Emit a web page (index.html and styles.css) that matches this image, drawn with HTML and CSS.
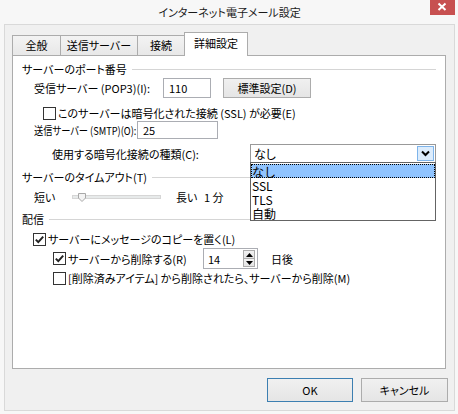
FILE: index.html
```html
<!DOCTYPE html>
<html lang="ja">
<head>
<meta charset="utf-8">
<title>インターネット電子メール設定</title>
<link rel="stylesheet" href="styles.css">
</head>
<body>
<div class="window">
  <div class="titlebar">
    <span class="title">インターネット電子メール設定</span>
    <span class="close"><svg width="25" height="15" viewBox="0 0 25 15"><path d="M8.5 3.5 L15.5 10 M15.5 3.5 L8.5 10" stroke="#fff" stroke-width="2" fill="none"/></svg></span>
  </div>
  <div class="client">
    <div class="tabs">
      <div class="tab t1">全般</div>
      <div class="tab t2">送信サーバー</div>
      <div class="tab t3">接続</div>
      <div class="tab t4 active">詳細設定</div>
    </div>
    <div class="panel">
      <div class="group g1"><span>サーバーのポート番号</span><span class="line"></span></div>

      <div class="row r-pop3">
        <span class="lbl lbl-pop3">受信サーバー (POP3)(I):</span>
        <span class="textbox tb-pop3">110</span>
        <span class="btn btn-std">標準設定(D)</span>
      </div>

      <div class="row r-ssl">
        <span class="check"><svg width="13" height="13" viewBox="0 0 13 13"><rect x="0.5" y="0.5" width="12" height="12" fill="#fff" stroke="#333"/></svg></span>
        <span class="ctext">このサーバーは暗号化された接続 (SSL) が必要(E)</span>
      </div>

      <div class="row r-smtp">
        <span class="lbl lbl-smtp"><span class="squeeze">送信サーバー (SMTP)(O):</span></span>
        <span class="textbox tb-smtp">25</span>
      </div>

      <div class="row r-enc">
        <span class="lbl lbl-enc">使用する暗号化接続の種類(C):</span>
        <div class="combo">
          <span class="combo-val">なし</span>
          <span class="combo-btn"><svg width="9" height="7" viewBox="0 0 9 7"><path d="M1 1.5 L4.5 5 L8 1.5" stroke="#000" stroke-width="2" fill="none"/></svg></span>
          <ul class="dropdown">
            <li class="sel">なし</li>
            <li>SSL</li>
            <li>TLS</li>
            <li>自動</li>
          </ul>
        </div>
      </div>

      <div class="group g2"><span>サーバーのタイムアウト(T)</span><span class="line"></span></div>

      <div class="row r-slider">
        <span class="lbl lbl-short">短い</span>
        <span class="track"><span class="thumb"><svg width="9" height="9" viewBox="0 0 9 9"><path d="M0.5 0.5 H7.5 V5 L4 8.5 L0.5 5 Z" fill="#f3f3f3" stroke="#a8a8a8"/></svg></span></span>
        <span class="lbl lbl-long">長い</span>
        <span class="lbl">1 分</span>
      </div>

      <div class="group g3"><span>配信</span><span class="line"></span></div>

      <div class="row r-c1">
        <span class="check"><svg width="13" height="13" viewBox="0 0 13 13"><rect x="0.5" y="0.5" width="12" height="12" fill="#fff" stroke="#333"/><path d="M2.8 6.6 L5.3 9.1 L10.2 3.6" stroke="#222" stroke-width="2" fill="none"/></svg></span>
        <span class="ctext">サーバーにメッセージのコピーを置く(L)</span>
      </div>

      <div class="row r-c2">
        <span class="check"><svg width="13" height="13" viewBox="0 0 13 13"><rect x="0.5" y="0.5" width="12" height="12" fill="#fff" stroke="#333"/><path d="M2.8 6.6 L5.3 9.1 L10.2 3.6" stroke="#222" stroke-width="2" fill="none"/></svg></span>
        <span class="ctext ctext-del">サーバーから削除する(R)</span>
        <span class="spin">
          <span class="spin-val">14</span>
          <span class="spin-btns">
            <span class="spin-b"><svg width="7" height="4" viewBox="0 0 7 4"><path d="M0 4 L3.5 0 L7 4 Z" fill="#000"/></svg></span>
            <span class="spin-b"><svg width="7" height="4" viewBox="0 0 7 4"><path d="M0 0 L3.5 4 L7 0 Z" fill="#000"/></svg></span>
          </span>
        </span>
        <span class="lbl lbl-days">日後</span>
      </div>

      <div class="row r-c3">
        <span class="check"><svg width="13" height="13" viewBox="0 0 13 13"><rect x="0.5" y="0.5" width="12" height="12" fill="#fff" stroke="#333"/></svg></span>
        <span class="ctext">[削除済みアイテム] から削除されたら、サーバーから削除(M)</span>
      </div>
    </div>
    <div class="buttons">
      <span class="dlg-btn ok">OK</span>
      <span class="dlg-btn cancel">キャンセル</span>
    </div>
  </div>
</div>
</body>
</html>
```

FILE: styles.css
```css
* { box-sizing: border-box; }
html, body { margin: 0; padding: 0; }
body {
  width: 458px;
  height: 414px;
  overflow: hidden;
  background: #f7f7f7;
  font-family: "Noto Sans CJK JP", "Noto Sans", sans-serif;
  font-size: 11px;
  line-height: 14px;
  color: #000;
  font-feature-settings: "palt";
}
.window {
  width: 458px;
  height: 414px;
  display: flex;
  flex-direction: column;
  padding: 0 3px 3px 4px;
}
.titlebar {
  height: 24px;
  flex: none;
  display: grid;
  grid-template-columns: 1fr auto 1fr;
}
.title {
  grid-column: 2;
  font-size: 11px;
  line-height: 24px;
  color: #1a1a1a;
}
.close {
  grid-column: 3;
  justify-self: end;
  align-self: start;
  width: 25px;
  height: 15px;
  background: #c75050;
  display: flex;
}
.client {
  flex: 1;
  border: 1px solid #d9d9d9;
  background: #f0f0f0;
  padding: 7px 8px 0 7px;
  display: flex;
  flex-direction: column;
}
.tabs {
  display: flex;
  align-items: flex-end;
  height: 23px;
  flex: none;
  position: relative;
  z-index: 1;
}
.tab {
  height: 20px;
  border: 1px solid #acacac;
  border-bottom: none;
  background: linear-gradient(#f3f3f3, #e8e8e8);
  margin-left: -1px;
  text-align: center;
  line-height: 19px;
}
.tab.t1 { margin-left: 0; width: 49px; }
.tab.t2 { width: 78px; }
.tab.t3 { width: 48px; }
.tab.t4 { width: 64px; }
.tab.active {
  height: 24px;
  margin-bottom: -1px;
  background: #fff;
  line-height: 20px;
}
.panel {
  height: 314px;
  flex: none;
  border: 1px solid #acacac;
  background: #fff;
  padding: 4px 9px 0 9px;
  position: relative;
}
.group {
  display: flex;
  align-items: center;
  height: 18px;
}
.group .line {
  flex: 1;
  height: 1px;
  background: #d5d5d5;
  margin-left: 5px;
}
.g2 { height: 14px; margin-top: 7px; }
.g3 { height: 14px; margin-top: 8px; }
.row {
  display: flex;
  align-items: center;
}
.r-pop3 { height: 20px; padding-left: 12px; }
.r-ssl { height: 16px; margin-top: 7px; padding-left: 21px; }
.r-smtp { height: 18px; padding-left: 12px; }
.r-enc { height: 19px; margin-top: 5px; padding-left: 30px; }
.r-slider { height: 14px; margin-top: 6px; padding-left: 12px; }
.r-c1 { height: 14px; margin-top: 6px; padding-left: 11px; }
.r-c2 { height: 21px; margin-top: 2px; padding-left: 31px; }
.r-c3 { height: 14px; margin-top: 2px; padding-left: 31px; }

.lbl { white-space: nowrap; }
.lbl-pop3 { width: 129px; flex: none; }
.lbl-smtp { width: 103px; flex: none; }
.squeeze { display: inline-block; transform: scaleX(0.84); transform-origin: 0 50%; }
.lbl-enc { width: 198px; flex: none; }
.lbl-short { width: 38px; }
.lbl-long { width: 28px; margin-left: 15px; }
.lbl-days { margin-left: 13px; }

.textbox {
  height: 100%;
  border: 1px solid #abadb3;
  background: #fff;
  padding-left: 5px;
  display: flex;
  align-items: center;
  flex: none;
}
.tb-pop3 { width: 48px; }
.tb-smtp { width: 81px; }
.btn {
  height: 100%;
  width: 88px;
  margin-left: 12px;
  border: 1px solid #acacac;
  background: linear-gradient(#f0f0f0, #e5e5e5);
  display: flex;
  align-items: center;
  justify-content: center;
}
.check { width: 13px; height: 13px; display: flex; flex: none; }
.ctext { margin-left: 2px; white-space: nowrap; }
.ctext-del { width: 135px; }

.combo {
  position: relative;
  width: 186px;
  height: 19px;
  border: 1px solid #999;
  background: #fff;
  display: flex;
  align-items: center;
  padding: 0 1px 0 3px;
}
.combo-val { flex: 1; font-size: 12px; }
.combo-btn {
  width: 17px;
  height: 15px;
  background: #dcecfc;
  border: 1px solid #7eb4ea;
  display: flex;
  align-items: center;
  justify-content: center;
}
.dropdown {
  position: absolute;
  left: -1px;
  top: 17px;
  width: 186px;
  height: 59px;
  margin: 0;
  padding: 1px 0 0 0;
  list-style: none;
  background: #fff;
  border: 1px solid #646464;
  z-index: 5;
  font-size: 12px;
  font-feature-settings: normal;
}
.dropdown li {
  height: 14px;
  line-height: 14px;
  padding: 1px 0 0 1px;
}
.dropdown li.sel {
  background: #90c4ff;
  outline: 1px dotted #000;
  outline-offset: -1px;
}

.track {
  position: relative;
  width: 89px;
  height: 4px;
  background: #e7eaea;
  border: 1px solid #d6d6d6;
}
.thumb {
  position: absolute;
  left: 5px;
  top: -3px;
  display: flex;
}

.spin {
  width: 55px;
  height: 21px;
  border: 1px solid #abadb3;
  background: #fff;
  display: flex;
  align-items: center;
  padding: 1px 2px 1px 4px;
}
.spin-val { flex: 1; }
.spin-btns {
  width: 12px;
  height: 100%;
  display: flex;
  flex-direction: column;
}
.spin-b {
  flex: 1;
  background: linear-gradient(#f2f2f2, #e4e4e4);
  border: 1px solid #acacac;
  display: flex;
  align-items: center;
  justify-content: center;
}
.spin-b + .spin-b { border-top: none; }

.buttons {
  display: flex;
  justify-content: flex-end;
  gap: 8px;
  margin-top: 9px;
  margin-right: -2px;
}
.dlg-btn {
  height: 24px;
  width: 86px;
  border: 1px solid #acacac;
  background: linear-gradient(#f0f0f0, #e5e5e5);
  display: flex;
  align-items: center;
  justify-content: center;
}
.dlg-btn.ok { border-color: #3c7fb1; }
.dlg-btn.cancel { width: 87px; }
```
